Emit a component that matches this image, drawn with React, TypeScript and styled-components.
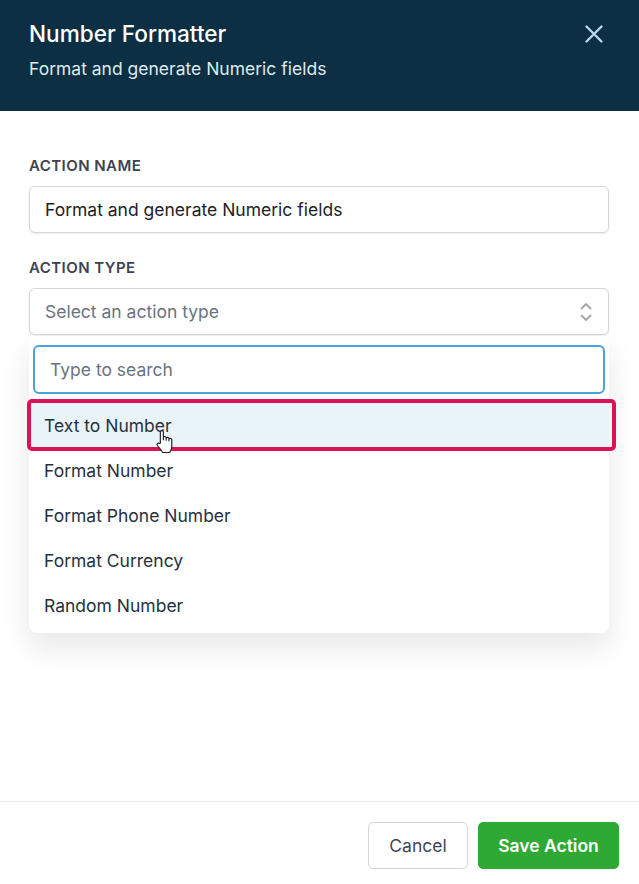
import { createGlobalStyle, styled } from 'styled-components';

const GlobalStyle = createGlobalStyle`
  html, body {
    margin: 0;
    padding: 0;
    background: #fff;
  }
  * {
    box-sizing: border-box;
  }
`;

const Page = styled.div`
  display: flex;
  flex-direction: column;
  width: 639px;
  height: 884px;
  overflow: hidden;
  font-family: Inter, 'Liberation Sans', sans-serif;
  color: #1b2733;
`;

const Header = styled.header`
  display: flex;
  justify-content: space-between;
  height: 111px;
  padding: 20px 33px 0 29px;
  background: #0c2f43;
`;

const Title = styled.h1`
  margin: 0;
  font-size: 22.6px;
  line-height: 28px;
  font-weight: 500;
  color: #fff;
`;

const Subtitle = styled.p`
  margin: 9px 0 0;
  font-size: 17.5px;
  line-height: 24px;
  color: #dfe9f0;
`;

const CloseButton = styled.button`
  width: 24px;
  height: 24px;
  margin-top: 2px;
  padding: 0;
  border: 0;
  background: transparent;
  color: #b9d6ee;
`;

const Body = styled.main`
  position: relative;
  flex: 1;
  padding: 45px 30px 0 29px;
`;

const Label = styled.label`
  display: block;
  margin-bottom: 10px;
  font-size: 15px;
  line-height: 20px;
  font-weight: 600;
  letter-spacing: 0.45px;
  color: #3d4350;
`;

const Field = styled.div`
  margin-bottom: 25px;
`;

const TextBox = styled.div<{ $muted?: boolean }>`
  display: flex;
  align-items: center;
  justify-content: space-between;
  height: 47px;
  padding: 0 15px;
  border: 1px solid #d4d6da;
  border-radius: 6px;
  background: #fff;
  box-shadow: 0 1px 2px rgba(16, 24, 40, 0.08);
  font-size: 17.5px;
  color: ${({ $muted }) => ($muted ? '#6c7280' : '#1d2126')};
`;

const Dropdown = styled.div`
  position: absolute;
  top: 225px;
  left: 29px;
  width: 580px;
  height: 297px;
  padding: 9px 4px 0;
  border-radius: 8px;
  background: #fff;
  box-shadow: 0 14px 30px rgba(16, 24, 40, 0.1);
`;

const SearchBox = styled.div`
  display: flex;
  align-items: center;
  height: 49px;
  padding: 0 15px;
  border: 2px solid #4aa3d8;
  border-radius: 6px;
  font-size: 17.5px;
  color: #6c7280;
`;

const OptionList = styled.ul`
  margin: 9px -4px 0;
  padding: 0;
  list-style: none;
`;

const Option = styled.li<{ $active?: boolean }>`
  position: relative;
  display: flex;
  align-items: center;
  height: 45px;
  padding: 0 15px;
  font-size: 17.5px;
  color: #26313d;
  background: ${({ $active }) => ($active ? '#e9f4f9' : 'transparent')};
`;

const Highlight = styled.span`
  position: absolute;
  top: -4px;
  left: -2px;
  right: -7px;
  bottom: -3px;
  border: 4px solid #dc1257;
  border-radius: 5px;
  pointer-events: none;
`;

const Pointer = styled.svg`
  position: absolute;
  top: 25px;
  left: 124px;
`;

const Footer = styled.footer`
  display: flex;
  justify-content: flex-end;
  gap: 10px;
  height: 83px;
  padding: 20px 20px 0 0;
  border-top: 1px solid #e8e9eb;
`;

const Button = styled.button<{ $primary?: boolean }>`
  height: 47px;
  border-radius: 5px;
  font-family: inherit;
  font-size: 17.5px;
  font-weight: ${({ $primary }) => ($primary ? 600 : 400)};
  border: 1px solid ${({ $primary }) => ($primary ? '#2eaa34' : '#d4d6da')};
  background: ${({ $primary }) => ($primary ? '#2eaa34' : '#fff')};
  color: ${({ $primary }) => ($primary ? '#fff' : '#3f4657')};
  width: ${({ $primary }) => ($primary ? '141px' : '100px')};
`;

const options = ['Text to Number', 'Format Number', 'Format Phone Number', 'Format Currency', 'Random Number'];

export default function App() {
  return (
    <Page>
      <GlobalStyle />
      <Header>
        <div>
          <Title>Number Formatter</Title>
          <Subtitle>Format and generate Numeric fields</Subtitle>
        </div>
        <CloseButton aria-label="Close">
          <svg width="24" height="24" viewBox="0 0 24 24" fill="none" stroke="currentColor" strokeWidth="2.4" strokeLinecap="round">
            <path d="M4.500 4.500l15 15M19.500 4.500l-15 15" />
          </svg>
        </CloseButton>
      </Header>
      <Body>
        <Field>
          <Label>ACTION NAME</Label>
          <TextBox>Format and generate Numeric fields</TextBox>
        </Field>
        <Field>
          <Label>ACTION TYPE</Label>
          <TextBox $muted>
            Select an action type
            <svg width="14" height="22" viewBox="0 0 14 22" fill="none" stroke="#a3a5a9" strokeWidth="1.8" strokeLinecap="round" strokeLinejoin="round">
              <path d="M2.500 7.500L7 3l4.500 4.500M2.500 14.500L7 19l4.500-4.500" />
            </svg>
          </TextBox>
        </Field>
        <Dropdown>
          <SearchBox>Type to search</SearchBox>
          <OptionList>
            {options.map((option, index) => (
              <Option key={option} $active={index === 0}>
                {option}
                {index === 0 && <Highlight />}
                {index === 0 && (
                  <Pointer width="24" height="28" viewBox="0 0 20 24" fill="#fff" stroke="#1d2126" strokeWidth="1" strokeLinejoin="round">
                    <path d="M6 13V3.500a1.300 1.300 0 0 1 2.600 0V10V8.500a1.200 1.200 0 0 1 2.400 0V10.500V9.200a1.200 1.200 0 0 1 2.400 0V11V10a1.200 1.200 0 0 1 2.400 0v6c0 2.500-1.300 4-1.800 5H8c-.8-1.500-2-3-4.500-6-1-1.300.5-2.800 1.800-1.700z" />
                  </Pointer>
                )}
              </Option>
            ))}
          </OptionList>
        </Dropdown>
      </Body>
      <Footer>
        <Button>Cancel</Button>
        <Button $primary>Save Action</Button>
      </Footer>
    </Page>
  );
}
